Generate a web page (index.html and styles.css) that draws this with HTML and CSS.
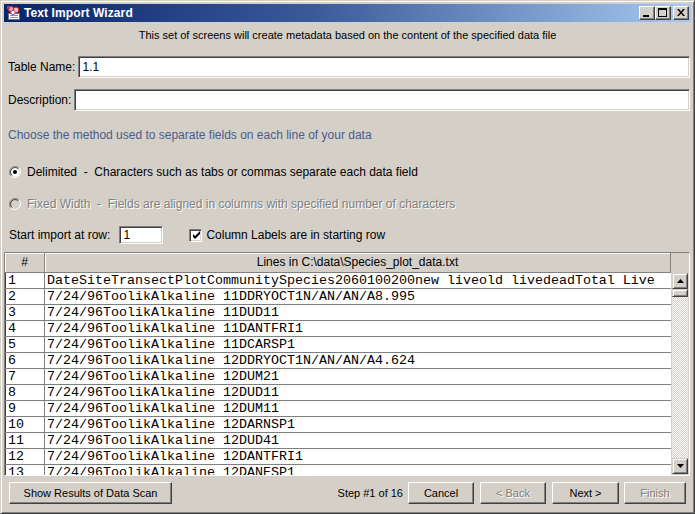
FILE: index.html
```html
<!DOCTYPE html>
<html>
<head>
<meta charset="utf-8">
<title>Text Import Wizard</title>
<link rel="stylesheet" href="styles.css">
</head>
<body>
<div class="window">
  <div class="titlebar">
    <svg class="appicon" width="16" height="16" viewBox="0 0 16 16">
      <rect x="2.5" y="8.5" width="11" height="6" fill="#fff" stroke="#6b6b8c"/>
      <line x1="4" y1="10.5" x2="12" y2="10.5" stroke="#8c8cc0"/>
      <line x1="4" y1="12.5" x2="12" y2="12.5" stroke="#8c8cc0"/>
      <circle cx="5" cy="4" r="2.6" fill="#e8a0b0" stroke="#c03040"/>
      <circle cx="10" cy="5" r="2.8" fill="#f0c0c8" stroke="#d02030"/>
      <circle cx="7" cy="7.5" r="2.2" fill="#ffffff" stroke="#c04060"/>
      <rect x="1" y="1" width="3" height="3" fill="#d03040"/>
    </svg>
    <span class="title">Text Import Wizard</span>
    <div class="tbtns">
      <div class="tbtn"><svg width="8" height="8" viewBox="0 0 8 8"><rect x="0" y="6" width="6" height="2" fill="#000"/></svg></div>
      <div class="tbtn"><svg width="9" height="9" viewBox="0 0 9 9"><rect x="0.5" y="0.5" width="8" height="8" fill="none" stroke="#000"/><rect x="0" y="1" width="9" height="1" fill="#000"/></svg></div>
      <div class="tbtn tclose"><svg width="8" height="7" viewBox="0 0 8 7"><path d="M0 0h2l2 2.5L6 0h2L5 3.5 8 7H6L4 4.5 2 7H0l3-3.5z" fill="#000"/></svg></div>
    </div>
  </div>
  <div class="content">
    <div class="subtitle">This set of screens will create metadata based on the content of the specified data file</div>

    <div class="field-row row-name">
      <span class="label">Table Name:</span>
      <div class="textfield">1.1</div>
    </div>
    <div class="field-row row-desc">
      <span class="label">Description:</span>
      <div class="textfield"></div>
    </div>

    <div class="choose">Choose the method used to separate fields on each line of your data</div>

    <div class="radio-row row-delim">
      <svg class="radio" width="12" height="12" viewBox="0 0 12 12">
        <path d="M10.5 2.2A5.5 5.5 0 1 0 2.2 10.5" fill="none" stroke="#808080"/>
        <path d="M1.5 9.8A5.5 5.5 0 1 0 9.8 1.5" fill="none" stroke="#fff"/>
        <circle cx="6" cy="6" r="4.5" fill="#fff"/>
        <path d="M9.4 2.9A4.5 4.5 0 1 0 2.9 9.4" fill="none" stroke="#404040"/>
        <circle cx="6" cy="6" r="2" fill="#000"/>
      </svg>
      <span class="rlabel">Delimited  -  Characters such as tabs or commas separate each data field</span>
    </div>
    <div class="radio-row row-fixed">
      <svg class="radio" width="12" height="12" viewBox="0 0 12 12">
        <path d="M10.5 2.2A5.5 5.5 0 1 0 2.2 10.5" fill="none" stroke="#808080"/>
        <path d="M1.5 9.8A5.5 5.5 0 1 0 9.8 1.5" fill="none" stroke="#fff"/>
        <circle cx="6" cy="6" r="4.5" fill="#d4d0c8"/>
        <path d="M9.4 2.9A4.5 4.5 0 1 0 2.9 9.4" fill="none" stroke="#404040"/>
      </svg>
      <span class="rlabel disabled">Fixed Width  -  Fields are aligned in columns with specified number of characters</span>
    </div>

    <div class="start-row">
      <span class="label">Start import at row:</span>
      <div class="textfield small">1</div>
      <div class="checkbox">
        <svg width="9" height="9" viewBox="0 0 9 9"><path d="M1 3v3l2 2 5-5V0L3 5z" fill="#000"/></svg>
      </div>
      <span class="cblabel">Column Labels are in starting row</span>
    </div>

    <div class="pane">
      <div class="hdr hnum">#</div>
      <div class="hdr hlines">Lines in C:\data\Species_plot_data.txt</div>
      <div class="corner"></div>
      <div class="rows">
        <div class="row"><div class="cnum">1</div><div class="cdata">DateSiteTransectPlotCommunitySpecies2060100200new liveold livedeadTotal Live</div></div>
        <div class="row"><div class="cnum">2</div><div class="cdata">7/24/96ToolikAlkaline 11DDRYOCT1N/AN/AN/A8.995</div></div>
        <div class="row"><div class="cnum">3</div><div class="cdata">7/24/96ToolikAlkaline 11DUD11</div></div>
        <div class="row"><div class="cnum">4</div><div class="cdata">7/24/96ToolikAlkaline 11DANTFRI1</div></div>
        <div class="row"><div class="cnum">5</div><div class="cdata">7/24/96ToolikAlkaline 11DCARSP1</div></div>
        <div class="row"><div class="cnum">6</div><div class="cdata">7/24/96ToolikAlkaline 12DDRYOCT1N/AN/AN/A4.624</div></div>
        <div class="row"><div class="cnum">7</div><div class="cdata">7/24/96ToolikAlkaline 12DUM21</div></div>
        <div class="row"><div class="cnum">8</div><div class="cdata">7/24/96ToolikAlkaline 12DUD11</div></div>
        <div class="row"><div class="cnum">9</div><div class="cdata">7/24/96ToolikAlkaline 12DUM11</div></div>
        <div class="row"><div class="cnum">10</div><div class="cdata">7/24/96ToolikAlkaline 12DARNSP1</div></div>
        <div class="row"><div class="cnum">11</div><div class="cdata">7/24/96ToolikAlkaline 12DUD41</div></div>
        <div class="row"><div class="cnum">12</div><div class="cdata">7/24/96ToolikAlkaline 12DANTFRI1</div></div>
        <div class="row"><div class="cnum">13</div><div class="cdata">7/24/96ToolikAlkaline 12DANESP1</div></div>
      </div>
      <div class="vscroll">
        <div class="sbtn"><svg width="7" height="4" viewBox="0 0 7 4"><path d="M3.5 0L7 4H0z" fill="#000"/></svg></div>
        <div class="thumb"></div>
        <div class="track"></div>
        <div class="sbtn"><svg width="7" height="4" viewBox="0 0 7 4"><path d="M0 0h7L3.5 4z" fill="#000"/></svg></div>
      </div>
    </div>

    <div class="buttons">
      <div class="btn btn-scan">Show Results of Data Scan</div>
      <div class="spacer"></div>
      <span class="step">Step #1 of 16</span>
      <div class="btn btn-cancel">Cancel</div>
      <div class="btn btn-back disabled">&lt; Back</div>
      <div class="btn btn-next">Next &gt;</div>
      <div class="btn btn-finish disabled">Finish</div>
    </div>
  </div>
</div>
</body>
</html>
```

FILE: styles.css
```css
html, body {
  margin: 0;
  padding: 0;
  background: #d4d0c8;
}

.window {
  box-sizing: border-box;
  width: 695px;
  height: 514px;
  background: #d4d0c8;
  border: 1px solid;
  border-color: #d4d0c8 #404040 #404040 #d4d0c8;
  box-shadow: inset 1px 1px #ffffff, inset -1px -1px #808080;
  padding: 3px 3px 3px 3px;
  display: flex;
  flex-direction: column;
  font-family: "Liberation Sans", Arial, sans-serif;
  font-size: 12px;
  color: #000;
}

.titlebar {
  height: 18px;
  flex: none;
  background: linear-gradient(to right, #0a246a 0%, #3a5a9a 45%, #a6caf0 100%);
  display: flex;
  align-items: center;
  padding-left: 2px;
}

.appicon {
  flex: none;
  margin-top: 0;
}

.title {
  color: #fff;
  font-weight: bold;
  font-size: 12px;
  margin-left: 2px;
  letter-spacing: 0.1px;
}

.tbtns {
  margin-left: auto;
  display: flex;
  margin-right: 2px;
}

.tbtn {
  box-sizing: border-box;
  width: 16px;
  height: 14px;
  background: #d4d0c8;
  border: 1px solid;
  border-color: #fff #404040 #404040 #fff;
  box-shadow: inset -1px -1px #808080;
  display: flex;
  align-items: center;
  justify-content: center;
  padding-right: 1px;
  padding-bottom: 1px;
}

.tclose {
  margin-left: 2px;
}

.content {
  flex: 1;
  display: flex;
  flex-direction: column;
}

.subtitle {
  margin-top: 6px;
  height: 14px;
  line-height: 14px;
  text-align: center;
  font-size: 11px;
}

.field-row {
  display: flex;
  align-items: center;
  height: 22px;
  padding-left: 4px;
  padding-right: 1px;
}

.row-name { margin-top: 14px; }
.row-desc { margin-top: 11px; }

.label {
  margin-right: 3px;
  white-space: nowrap;
}

.textfield {
  box-sizing: border-box;
  flex: 1;
  height: 22px;
  background: #fff;
  border: 1px solid;
  border-color: #808080 #ffffff #ffffff #808080;
  box-shadow: inset 1px 1px #404040, inset -1px -1px #d4d0c8;
  padding: 0 3px;
  line-height: 20px;
  font-size: 12px;
}

.textfield.small {
  flex: none;
  width: 44px;
  height: 18px;
  line-height: 17px;
  margin-left: 6px;
}

.choose {
  margin-top: 17px;
  height: 14px;
  line-height: 14px;
  padding-left: 4px;
  color: #4a5b8e;
}

.radio-row {
  display: flex;
  align-items: center;
  height: 14px;
  padding-left: 5px;
}

.row-delim { margin-top: 23px; }
.row-fixed { margin-top: 18px; }

.radio { flex: none; }

.rlabel {
  margin-left: 6px;
  white-space: pre;
}

.disabled {
  color: #808080;
  text-shadow: 1px 1px #ffffff;
}

.start-row {
  margin-top: 15px;
  height: 18px;
  display: flex;
  align-items: center;
  padding-left: 5px;
}

.checkbox {
  box-sizing: border-box;
  width: 13px;
  height: 13px;
  margin-left: 26px;
  background: #fff;
  border: 1px solid;
  border-color: #808080 #ffffff #ffffff #808080;
  box-shadow: inset 1px 1px #404040, inset -1px -1px #d4d0c8;
  display: flex;
  align-items: center;
  justify-content: center;
  padding: 1px 0 0 1px;
}

.cblabel {
  margin-left: 4px;
}

.pane {
  box-sizing: border-box;
  margin-top: 8px;
  margin-right: 1px;
  height: 224px;
  border: 1px solid;
  border-color: #808080 #ffffff #ffffff #808080;
  background: #fff;
  display: grid;
  grid-template-columns: 666px 18px;
  grid-template-rows: 20px 202px;
}

.hdr {
  box-sizing: border-box;
  background: #d4d0c8;
  border-right: 1px solid #808080;
  border-bottom: 1px solid #808080;
  box-shadow: inset 1px 1px #ffffff;
  text-align: center;
  line-height: 19px;
  font-size: 12px;
}

.hnum {
  grid-column: 1;
  grid-row: 1;
  width: 40px;
}

.hlines {
  grid-column: 1;
  grid-row: 1;
  margin-left: 40px;
}

.corner {
  grid-column: 2;
  grid-row: 1;
  background: #d4d0c8;
}

.rows {
  grid-column: 1;
  grid-row: 2;
  overflow: hidden;
  background: #fff;
}

.row {
  display: flex;
  height: 16px;
  box-sizing: border-box;
  border-bottom: 1px solid #808080;
  font-family: "Liberation Mono", "Courier New", monospace;
  font-size: 13.33px;
  line-height: 15px;
  white-space: pre;
}

.cnum {
  box-sizing: border-box;
  width: 40px;
  padding-left: 2px;
  border-right: 1px solid #808080;
  border-left: 1px solid #404040;
}

.cdata {
  padding-left: 2px;
  flex: 1;
}

.vscroll {
  grid-column: 2;
  grid-row: 2;
  background: #d4d0c8;
  display: flex;
  flex-direction: column;
  padding: 0 1px 1px 1px;
}

.sbtn, .thumb {
  box-sizing: border-box;
  width: 16px;
  background: #d4d0c8;
  border: 1px solid;
  border-color: #d4d0c8 #404040 #404040 #d4d0c8;
  box-shadow: inset 1px 1px #ffffff, inset -1px -1px #808080;
  flex: none;
}

.sbtn {
  height: 16px;
  display: flex;
  align-items: center;
  justify-content: center;
}

.thumb {
  height: 8px;
}

.track {
  flex: 1;
  background: repeating-conic-gradient(#ffffff 0 25%, #d4d0c8 0 50%) 0 0 / 2px 2px;
}

.buttons {
  margin-top: 6px;
  height: 22px;
  display: flex;
  align-items: center;
  padding-left: 5px;
  padding-right: 5px;
  font-size: 11px;
}

.spacer { flex: 1; }

.step {
  margin-right: 5px;
}

.btn {
  box-sizing: border-box;
  height: 22px;
  background: #d4d0c8;
  border: 1px solid;
  border-color: #ffffff #404040 #404040 #ffffff;
  box-shadow: inset -1px -1px #808080;
  display: flex;
  align-items: center;
  justify-content: center;
}

.btn-scan { width: 163px; }
.btn-cancel { width: 66px; }
.btn-back { width: 66px; margin-left: 6px; }
.btn-next { width: 67px; margin-left: 6px; }
.btn-finish { width: 62px; margin-left: 5px; }
```
